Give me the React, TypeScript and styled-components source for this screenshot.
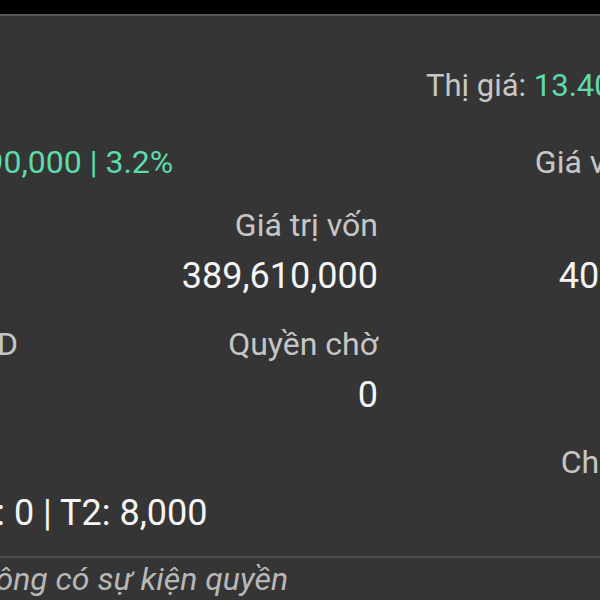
import React from "react";
import styled, { createGlobalStyle } from "styled-components";

const Global = createGlobalStyle`
  html, body { margin: 0; padding: 0; background: #353535; overflow: hidden; }
  body { font-family: Roboto, "Noto Sans", "DejaVu Sans", sans-serif; }
`;

const Page = styled.div`
  width: 600px;
  height: 600px;
  overflow: hidden;
  background: #353535;
  display: flex;
  flex-direction: column;
`;

const StatusBar = styled.div`
  flex: none;
  height: 14px;
  background: #000;
  border-bottom: 2px solid #5a5a5a;
`;

const Screen = styled.div`
  margin-left: -151px;
  width: 906px;
  padding-top: 52px;
  display: flex;
  flex-direction: column;
`;

const Row = styled.div<{ $gap: number }>`
  display: grid;
  grid-template-columns: 301px 228px 377px;
  margin-top: ${(p) => p.$gap}px;
  white-space: nowrap;
`;

const Cell = styled.div<{ $align?: "left" | "right"; $inset?: number }>`
  display: flex;
  flex-direction: column;
  gap: 9px;
  align-items: ${(p) => (p.$align === "right" ? "flex-end" : "flex-start")};
  padding-left: ${(p) => p.$inset ?? 0}px;
  min-width: 0;
`;

const Symbol = styled.span`
  font-size: 34px;
  line-height: 36px;
  font-weight: 700;
  color: #f4f4f4;
`;

const PriceLine = styled.span`
  font-size: 31px;
  line-height: 36px;
  color: #c6c6c6;
`;

const Up = styled.span`
  color: #5cdcaa;
`;

const HeadLine = styled.span`
  font-size: 32px;
  line-height: 44px;
  color: #c6c6c6;
`;

const Label = styled.span`
  font-size: 32px;
  line-height: 40px;
  color: #c6c6c6;
`;

const Value = styled.span`
  font-size: 36px;
  line-height: 44px;
  color: #f4f4f4;
`;

const Divider = styled.div`
  height: 2px;
  background: #4d4d4d;
  margin: 21px 0 1px;
`;

const Note = styled.div`
  font-size: 32px;
  line-height: 40px;
  font-style: italic;
  color: #b8b8b8;
  white-space: nowrap;
`;

type FieldData = { label: string; value: string };

const Field: React.FC<{ f: FieldData; align: "left" | "right" }> = ({ f, align }) => (
  <Cell $align={align}>
    <Label>{f.label}</Label>
    <Value>{f.value}</Value>
  </Cell>
);

const groups: { gap: number; cols: FieldData[] }[] = [
  {
    gap: 21,
    cols: [
      { label: "Tổng KL", value: "30,000" },
      { label: "Giá trị vốn", value: "389,610,000" },
      { label: "Giá trị TT", value: "402,000,000" },
    ],
  },
  {
    gap: 26,
    cols: [
      { label: "SL được GD", value: "22,000" },
      { label: "Quyền chờ", value: "0" },
      { label: "Cầm cố", value: "0" },
    ],
  },
];

export default function App() {
  return (
    <Page>
      <Global />
      <StatusBar />
      <Screen>
        <Row $gap={0}>
          <Cell>
            <Symbol>HPG</Symbol>
          </Cell>
          <div />
          <Cell $inset={48}>
            <PriceLine>
              Thị giá: <Up>13.40</Up>
            </PriceLine>
          </Cell>
        </Row>
        <Row $gap={36}>
          <Cell>
            <HeadLine>
              Lãi: <Up>+12,390,000 | 3.2%</Up>
            </HeadLine>
          </Cell>
          <div />
          <Cell $align="right">
            <HeadLine>Giá vốn: 12.987</HeadLine>
          </Cell>
        </Row>
        {groups.map((g, i) => (
          <Row key={i} $gap={g.gap}>
            {g.cols.map((f, j) => (
              <Field key={j} f={f} align={j === 0 ? "left" : "right"} />
            ))}
          </Row>
        ))}
        <Row $gap={25}>
          <Field f={{ label: "Chờ về", value: "T0: 0 | T1: 0 | T2: 8,000" }} align="left" />
          <div />
          <Field f={{ label: "Chờ giao dịch", value: "0" }} align="right" />
        </Row>
        <Divider />
        <Note>Hiện tại không có sự kiện quyền</Note>
      </Screen>
    </Page>
  );
}
